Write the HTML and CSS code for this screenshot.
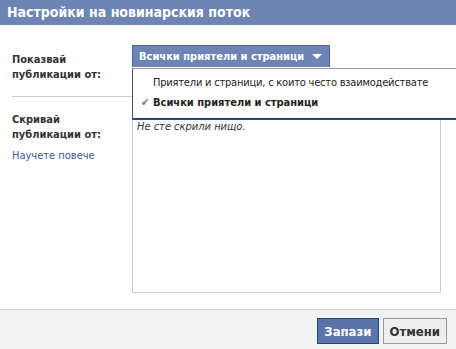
FILE: index.html
```html
<!DOCTYPE html>
<html>
<head>
<meta charset="utf-8">
<link rel="stylesheet" href="styles.css">
<title>Настройки на новинарския поток</title>
</head>
<body>
    <div class="dialog">
        <div class="header">Настройки на новинарския поток</div>

        <div class="content">
            <div class="labels">
                <div class="label first">Показвай<br>публикации от:</div>
                <div class="divider"></div>
                <div class="label">Скривай<br>публикации от:</div>
                <a class="learn" href="#">Научете повече</a>
            </div>

            <div class="fields">
                <div class="select">
                    <div class="select-btn">Всички приятели и страници <span class="arrow"></span></div>
                    <ul class="select-menu">
                        <li class="option">Приятели и страници, с които често взаимодействате</li>
                        <li class="option checked"><span class="check">&#10004;</span>Всички приятели и страници</li>
                    </ul>
                </div>
                <div class="hidden-list">
                    <em>Не сте скрили нищо.</em>
                </div>
            </div>
        </div>

        <div class="footer">
            <button class="btn save">Запази</button>
            <button class="btn cancel">Отмени</button>
        </div>
    </div>
</body>
</html>
```

FILE: styles.css
```css
body {
    margin: 0;
    font-family: "DejaVu Sans Condensed", "Liberation Sans", sans-serif;
    font-size: 11px;
    color: #333;
    background: white;
    overflow: hidden;
}

.dialog {
    width: 456px;
    height: 349px;
    display: flex;
    flex-direction: column;
}

.header {
    height: 25px;
    background: #6d84b4;
    color: white;
    font-size: 14px;
    font-weight: bold;
    line-height: 25px;
    padding-left: 7px;
}

.content {
    flex: 1;
    display: flex;
    padding: 20px 15px 0 12px;
}

.labels {
    width: 120px;
    display: flex;
    flex-direction: column;
}

.label {
    font-weight: bold;
    line-height: 15px;
}

.label.first {
    margin-top: 7px;
}

.divider {
    height: 1px;
    background: #ccc;
    margin: 14px 0 15px;
}

.learn {
    color: #3b5998;
    text-decoration: none;
    margin-top: 7px;
}

.fields {
    flex: 1;
    display: flex;
    flex-direction: column;
}

/* dropdown */
.select {
    position: relative;
    height: 23px;
}

.select-btn {
    display: inline-flex;
    align-items: center;
    height: 21px;
    padding: 0 6px;
    background: #6d84b4;
    border: 1px solid #4a62a0;
    border-bottom: none;
    color: white;
    font-weight: bold;
    width: 184px;
}

.arrow {
    margin-left: 8px;
    border-left: 5px solid transparent;
    border-right: 5px solid transparent;
    border-top: 5px solid white;
}

.select-menu {
    position: absolute;
    top: 23px;
    left: 0;
    width: 340px;
    margin: 0;
    padding: 4px 0 5px;
    list-style: none;
    background: white;
    border-left: 1px solid #555;
    border-top: 1px solid #999;
    border-bottom: 2px solid #29447e;
    z-index: 10;
}

.option {
    padding-left: 20px;
    line-height: 20px;
    color: #222;
    letter-spacing: -0.2px;
}

.option.checked {
    font-weight: bold;
    letter-spacing: 0;
    position: relative;
}

.check {
    position: absolute;
    left: 8px;
    color: #777;
    font-weight: normal;
    font-size: 11px;
}

.hidden-list {
    margin-top: 49px;
    height: 170px;
    border: 1px solid #ccc;
    padding: 2px 4px;
}

/* footer */
.footer {
    height: 40px;
    background: #f2f2f2;
    border-top: 1px solid #ccc;
    display: flex;
    justify-content: flex-end;
    align-items: flex-start;
    padding: 8px 9px 0 0;
    gap: 4px;
    box-sizing: border-box;
}

.btn {
    height: 26px;
    padding: 0 6px;
    font-family: inherit;
    font-size: 13px;
    font-weight: bold;
    cursor: pointer;
}

.btn.save {
    background: #5b74a8;
    border: 1px solid #29447e;
    color: white;
}

.btn.cancel {
    background: #eee;
    border: 1px solid #999;
    color: #333;
}
```
